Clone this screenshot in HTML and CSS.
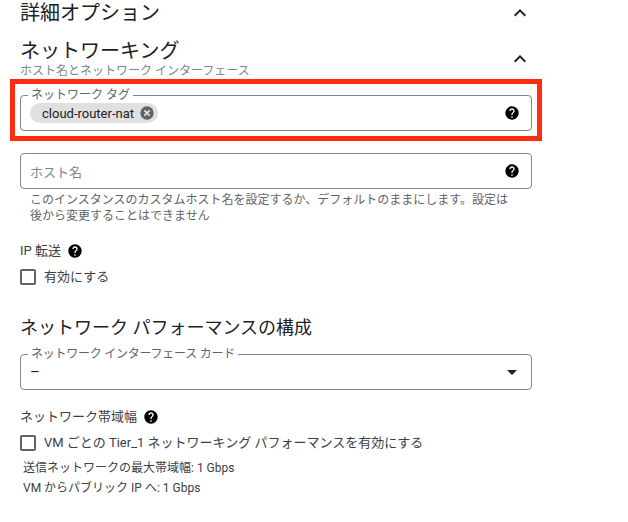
FILE: index.html
```html
<!DOCTYPE html>
<html lang="ja">
<head>
    <meta charset="UTF-8">
    <title>ネットワーキング</title>
    <link rel="stylesheet" href="styles.css">
</head>
<body>
    <svg class="sprite" width="0" height="0">
        <symbol id="help" viewBox="0 0 24 24">
            <path d="M12 2C6.48 2 2 6.48 2 12s4.48 10 10 10 10-4.48 10-10S17.52 2 12 2zm1 17h-2v-2h2v2zm2.07-7.75l-.9.92C13.45 12.9 13 13.5 13 15h-2v-.5c0-1.1.45-2.1 1.17-2.83l1.24-1.26c.37-.36.59-.86.59-1.41 0-1.1-.9-2-2-2s-2 .9-2 2H8c0-2.21 1.79-4 4-4s4 1.79 4 4c0 .88-.36 1.68-.93 2.25z"/>
        </symbol>
        <symbol id="chevron" viewBox="0 0 24 24">
            <path d="M7.41 15.41L12 10.83l4.59 4.58L18 14l-6-6-6 6z"/>
        </symbol>
    </svg>

    <main class="contenedor">
        <div class="cabecera cabecera-detalle">
            <h2>詳細オプション</h2>
            <svg class="chevron"><use href="#chevron"/></svg>
        </div>

        <div class="cabecera cabecera-red">
            <h2>ネットワーキング</h2>
            <svg class="chevron"><use href="#chevron"/></svg>
        </div>
        <p class="subtitulo">ホスト名とネットワーク インターフェース</p>

        <!-- Campo con etiqueta -->
        <fieldset class="campo campo-tag">
            <legend>ネットワーク タグ</legend>
            <div class="campo-fila">
                <span class="chip">
                    cloud-router-nat
                    <svg class="chip-x" viewBox="0 0 24 24">
                        <circle cx="12" cy="12" r="10" fill="#5f6368"/>
                        <path d="M8 8l8 8M16 8l-8 8" stroke="#e0e0e0" stroke-width="2.6"/>
                    </svg>
                </span>
                <svg class="ayuda"><use href="#help"/></svg>
            </div>
        </fieldset>

        <div class="campo campo-host">
            <span class="placeholder">ホスト名</span>
            <svg class="ayuda"><use href="#help"/></svg>
        </div>
        <p class="pista">このインスタンスのカスタムホスト名を設定するか、デフォルトのままにします。設定は<br>後から変更することはできません</p>

        <div class="titulo-ayuda titulo-ip">
            <span>IP 転送</span>
            <svg class="ayuda"><use href="#help"/></svg>
        </div>
        <label class="opcion opcion-ip"><span class="caja"></span>有効にする</label>

        <h2 class="titulo-rendimiento">ネットワーク パフォーマンスの構成</h2>

        <fieldset class="campo campo-select">
            <legend>ネットワーク インターフェース カード</legend>
            <div class="campo-fila">
                <span class="valor">–</span>
                <span class="flecha"></span>
            </div>
        </fieldset>

        <div class="titulo-ayuda titulo-banda">
            <span>ネットワーク帯域幅</span>
            <svg class="ayuda"><use href="#help"/></svg>
        </div>
        <label class="opcion opcion-tier"><span class="caja"></span>VM ごとの Tier_1 ネットワーキング パフォーマンスを有効にする</label>
        <p class="dato dato-1">送信ネットワークの最大帯域幅: 1 Gbps</p>
        <p class="dato">VM からパブリック IP へ: 1 Gbps</p>
    </main>

    <!-- Marco rojo de la captura -->
    <div class="marco"></div>
</body>
</html>
```

FILE: styles.css
```css
* {
    margin: 0;
    padding: 0;
    box-sizing: border-box;
}

body {
    font-family: Roboto, "Noto Sans CJK JP", sans-serif;
    background: white;
    color: #202124;
    height: 522px;
    overflow: hidden;
}

.sprite {
    position: absolute;
}

.contenedor {
    width: 532px;
    padding-left: 20px;
}

h2 {
    font-size: 20px;
    font-weight: 400;
    line-height: 24px;
}

.cabecera {
    display: flex;
    justify-content: space-between;
    align-items: flex-start;
    height: 24px;
}

.cabecera-detalle {
    margin-top: 1px;
}

.cabecera-red {
    margin-top: 14px;
}

.chevron {
    width: 24px;
    height: 24px;
    fill: #202124;
}

.cabecera-red .chevron {
    margin-top: 8px;
}

.subtitulo {
    font-size: 12px;
    line-height: 16px;
    color: #80868b;
    height: 16px;
}

.campo {
    border: 1px solid #80868b;
    border-radius: 4px;
    height: 36px;
    padding: 0 11px 0 9px;
}

fieldset.campo legend {
    font-size: 12px;
    line-height: 12px;
    color: #5f6368;
    margin-left: -2px;
    padding: 0 3px;
}

.campo-fila {
    display: flex;
    justify-content: space-between;
    align-items: center;
    padding-top: 2px;
}

.campo-tag {
    margin-top: 10px;
    height: 42px;
}

.chip {
    display: inline-flex;
    align-items: center;
    gap: 5px;
    height: 20px;
    background: #e0e0e0;
    border-radius: 10px;
    padding: 0 3px 0 12px;
    font-size: 13px;
    color: #202124;
}

.chip-x {
    width: 16px;
    height: 16px;
}

.ayuda {
    width: 16px;
    height: 16px;
    fill: #000;
}

.campo-host {
    display: flex;
    justify-content: space-between;
    align-items: center;
    margin-top: 22px;
    color: #80868b;
    font-size: 13px;
}

.pista {
    font-size: 12px;
    line-height: 16px;
    color: #5f6368;
    padding-left: 10px;
    margin-top: 3px;
}

.titulo-ayuda {
    display: flex;
    align-items: center;
    gap: 6px;
    font-size: 13px;
    line-height: 16px;
    color: #3c4043;
}

.titulo-ip {
    margin-top: 19px;
}

.opcion {
    display: flex;
    align-items: center;
    gap: 8px;
    font-size: 13px;
    line-height: 16px;
    color: #3c4043;
}

.opcion-ip {
    margin-top: 10px;
}

.caja {
    width: 16px;
    height: 16px;
    border: 2px solid #5f6368;
    border-radius: 2px;
}

.titulo-rendimiento {
    margin-top: 31px;
    font-size: 18px;
}

.campo-select {
    margin-top: 8px;
    height: 42px;
}

.campo-select .campo-fila {
    padding-top: 3px;
}

.campo-select legend {
    letter-spacing: -0.25px;
}

.valor {
    font-size: 15px;
    line-height: 18px;
}

.flecha {
    width: 0;
    height: 0;
    border-left: 5px solid transparent;
    border-right: 5px solid transparent;
    border-top: 5px solid #202124;
    margin-right: 3px;
}

.titulo-banda {
    margin-top: 19px;
}

.opcion-tier {
    margin-top: 10px;
}

.dato {
    font-size: 12px;
    line-height: 16px;
    color: #3c4043;
    padding-left: 3px;
    margin-top: 4px;
}

.dato-1 {
    margin-top: 9px;
}

.marco {
    position: absolute;
    left: 10px;
    top: 79px;
    width: 532px;
    height: 62px;
    border: 5px solid #ff2d0d;
}
```
